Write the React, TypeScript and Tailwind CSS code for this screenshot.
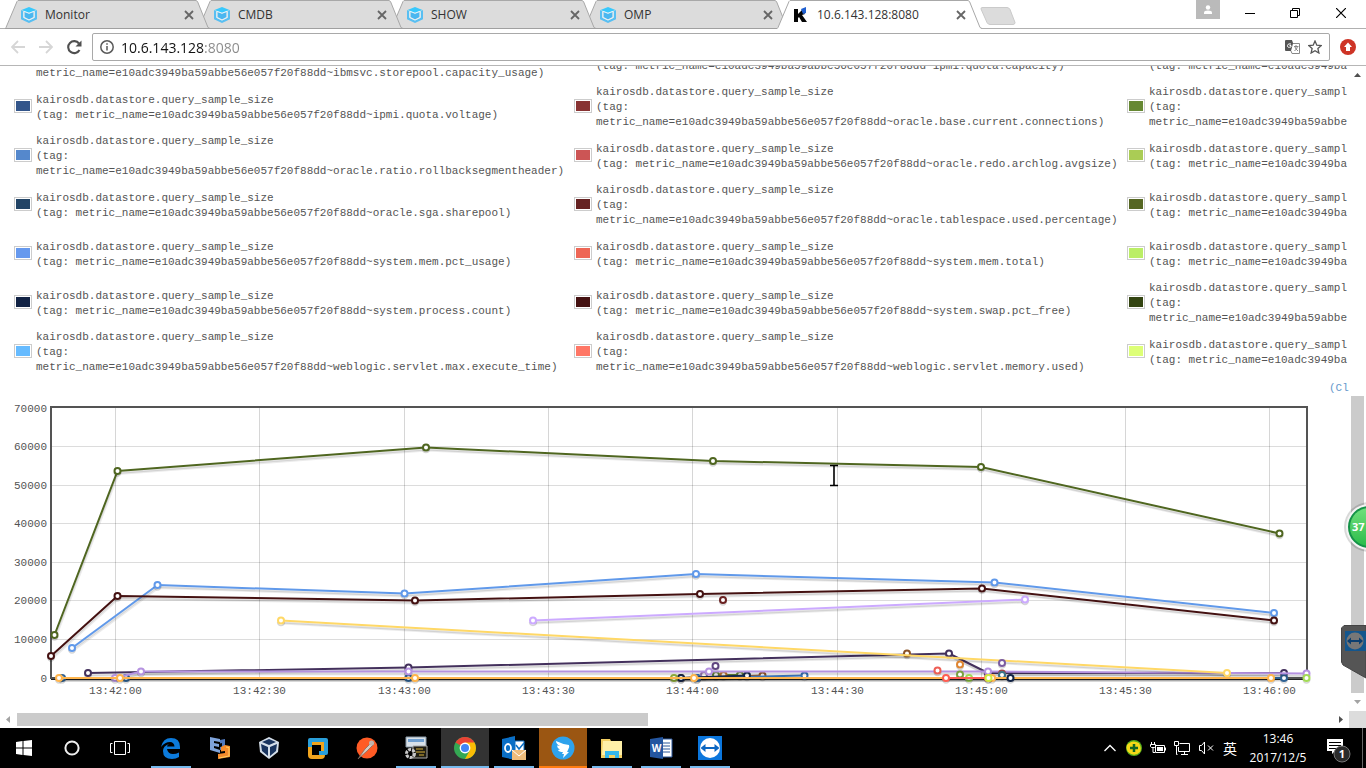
import React from "react";

const HASH = "metric_name=e10adc3949ba59abbe56e057f20f88dd~";
const NAME = "kairosdb.datastore.query_sample_size";
const CUT = "kairosdb.datastore.query_sampl";
const CUT_TAG = ["(tag: metric_name=e10adc3949ba"];
const CUT_TAG_WRAPPED = ["(tag:", "metric_name=e10adc3949ba59abbe"];
const BLANK = "\u00a0";

type Entry = { color: string; lines: string[] };

const one = (color: string, metric: string): Entry => ({ color, lines: [NAME, "(tag: " + HASH + metric + ")"] });
const wrapped = (color: string, metric: string): Entry => ({ color, lines: [NAME, "(tag:", HASH + metric + ")"] });
const cut = (color: string, tag: string[]): Entry => ({ color, lines: [CUT, ...tag] });

const LEGEND: Entry[][] = [
  [
    { color: "#4b6fa8", lines: [BLANK, BLANK, HASH + "ibmsvc.storepool.capacity_usage)"] },
    { color: "#aa4643", lines: [BLANK, "(tag: " + HASH + "ipmi.quota.capacity)"] },
    { color: "#89a54e", lines: [BLANK, ...CUT_TAG] },
  ],
  [one("#33558a", "ipmi.quota.voltage"), wrapped("#883333", "oracle.base.current.connections"), cut("#668833", CUT_TAG_WRAPPED)],
  [wrapped("#5588cc", "oracle.ratio.rollbacksegmentheader"), one("#cc5555", "oracle.redo.archlog.avgsize"), cut("#aacc55", CUT_TAG)],
  [one("#224466", "oracle.sga.sharepool"), wrapped("#662222", "oracle.tablespace.used.percentage"), cut("#556622", CUT_TAG)],
  [one("#6699ee", "system.mem.pct_usage"), one("#ee6655", "system.mem.total"), cut("#bbee66", CUT_TAG)],
  [one("#112244", "system.process.count"), one("#441111", "system.swap.pct_free"), cut("#334411", CUT_TAG_WRAPPED)],
  [wrapped("#66bbff", "weblogic.servlet.max.execute_time"), wrapped("#ff7766", "weblogic.servlet.memory.used"), cut("#ddff77", CUT_TAG)],
];

type Series = { c: string; p: number[][]; line?: boolean };

const SERIES: Series[] = [
  { c: "#4f6620", p: [[54.5, 635], [117.5, 471], [426, 447.5], [713, 461], [981, 467], [1279.5, 533.5]] },
  { c: "#6099ea", p: [[72, 648], [157.5, 585], [404.5, 593.5], [696, 574], [994.5, 582.5], [1274, 613]] },
  { c: "#441111", p: [[51, 656], [117.5, 596], [415, 600.5], [700, 594], [982, 588.5], [1274, 620.5]] },
  { c: "#6b2222", p: [[723, 600]] },
  { c: "#ccaaff", p: [[533, 620.5], [1025, 599.5]] },
  { c: "#43305c", p: [[88, 673], [408.5, 667.5], [949, 653.5], [988, 673], [1284, 673]] },
  { c: "#8a5226", p: [[907, 653.5]] },
  { c: "#2f6294", p: [[62, 678], [126, 678], [408.5, 678], [697, 678], [1284, 678]] },
  { c: "#9d7ab8", p: [[704, 675]] },
  { c: "#5f4580", p: [[715.5, 666]] },
  { c: "#668833", p: [[716, 675], [740, 675]] },
  { c: "#c4762f", p: [[723.5, 675]] },
  { c: "#9a5a2c", p: [[681, 678], [762.5, 675.5]] },
  { c: "#3a74b8", p: [[697, 678], [804.5, 675.5]] },
  { c: "#16294d", p: [[681, 678], [747, 675.5]] },
  { c: "#b592e0", p: [[115, 678], [141, 671.5], [408.5, 671.5], [709, 671.5], [988, 671.5], [1306.5, 673.5]] },
  { c: "#ffd866", p: [[281, 620.5], [1227, 673]] },
  { c: "#ee5e55", p: [[937.5, 670.5]] },
  { c: "#df8530", p: [[960, 664.5]] },
  { c: "#7ba040", p: [[960, 674.5]] },
  { c: "#7b5ca0", p: [[1002, 663]] },
  { c: "#a04444", p: [[1002, 673.5]] },
  { c: "#3a7488", p: [[1002, 675]] },
  { c: "#8aa83a", p: [[674, 678]] },
  { c: "#a3db55", p: [[969, 678], [1306.5, 678]], line: false },
  { c: "#ffb54d", p: [[59, 678], [120, 678], [415, 678], [694, 678], [992, 678], [1271, 678]] },
  { c: "#ff5d52", p: [[946, 678], [988, 678]] },
  { c: "#ccee44", p: [[988.5, 678]] },
  { c: "#112244", p: [[1010.5, 678]] },
];

const Y_TICKS = [70000, 60000, 50000, 40000, 30000, 20000, 10000, 0];
const Y_POS = [408, 446.5, 485.5, 523.5, 562.5, 600.5, 639.5, 678];
const X_TICKS: [number, string][] = [
  [115.5, "13:42:00"], [259.5, "13:42:30"], [404.5, "13:43:00"], [548.5, "13:43:30"], [692.5, "13:44:00"],
  [837.5, "13:44:30"], [981.5, "13:45:00"], [1125.5, "13:45:30"], [1269.5, "13:46:00"],
];

function Chart() {
  return (
    <svg viewBox="0 400 1351 310" className="block w-full" role="img" aria-label="Query sample size over time">
      {Y_POS.slice(1, 7).map((y) => <path key={y} d={`M51 ${y}H1307`} stroke="#dcdcdc" />)}
      {X_TICKS.map(([x]) => <path key={x} d={`M${x} 408V678`} stroke="#000" strokeOpacity=".16" />)}
      <rect x="51" y="407" width="1256" height="271" fill="none" stroke="#545454" strokeWidth="2" />
      <path d="M51 679.500H1308" stroke="#222" />
      {SERIES.map((s, i) => {
        const pts = s.p.map((q) => q.join(",")).join(" ");
        return (
          <g key={i} fill="none">
            {s.line !== false && s.p.length > 1 && (
              <>
                <polyline points={pts} stroke="#000" strokeOpacity=".08" strokeWidth="2" transform="translate(1 3)" />
                <polyline points={pts} stroke="#000" strokeOpacity=".11" strokeWidth="2" transform="translate(0 2)" />
                <polyline points={pts} stroke={s.c} strokeWidth="2" strokeLinejoin="round" />
              </>
            )}
            {s.p.map(([x, y], j) => (
              <g key={j}>
                <path d={`M${x - 3.4} ${y + 1.5}a3.4 3.4 0 0 0 6.8 0`} stroke="#000" strokeOpacity=".16" strokeWidth="1.5" />
                <circle cx={x} cy={y} r="3" fill="#fff" stroke={s.c} strokeWidth="2" />
              </g>
            ))}
          </g>
        );
      })}
      <g fill="#545454" fontFamily="'Liberation Mono', monospace" fontSize="11">
        {Y_TICKS.map((t, i) => <text key={t} x="47" y={Math.floor(Y_POS[i]) + 4} textAnchor="end">{t}</text>)}
        {X_TICKS.map(([x, t]) => <text key={t} x={x} y="694" textAnchor="middle">{t}</text>)}
      </g>
      <path d="M830 465.500h3.500l.5 1 .5-1h3.500M830 485.500h3.500l.5-1 .5 1h3.500M834 466v19" stroke="#000" strokeWidth="1.600" fill="none" />
    </svg>
  );
}

function HexLogo() {
  return (
    <svg width="16" height="16" viewBox="0 0 16 16" className="shrink-0" aria-hidden="true">
      <path d="M8 0l7.500 3L8 6 .5 3z" fill="#38c8fc" />
      <path d="M0 3l2.300 1.200v6.600L8 13.600l5.700-2.800V4.200L16 3v9.300L8 16l-8-3.700z" fill="#58bff2" />
      <path d="M3.500 5L8 6.800 12.500 5v5L8 12.400 3.500 10z" fill="#4ab7f0" />
      <path d="M2.800 4.200L8 6.200l5.200-2M2.800 4.500v6L8 13l5.200-2.500v-6" stroke="#e8f6fd" strokeWidth=".9" fill="none" />
    </svg>
  );
}

function KLogo() {
  return (
    <svg width="16" height="16" viewBox="0 0 16 16" className="shrink-0" aria-hidden="true">
      <path d="M1 2h4v5l4-4 3 4-3 1 5 7H9L6 10l-1 1v4H1z" fill="#050505" />
      <path d="M8 2l5-2v6l-3 1z" fill="#1f5fd0" />
    </svg>
  );
}

function Tab({ title, active = false, z }: { title: string; active?: boolean; z: string }) {
  return (
    <div className={`relative -ml-3 h-[29px] w-[205px] shrink first:ml-0 ${z}`}>
      <svg className="absolute inset-0 h-full w-full" viewBox="0 0 205 29" preserveAspectRatio="none" aria-hidden="true">
        <path d="M0 29L1 27.500 12 1.500 13 .5H191L192.500 1.500 203 27.500 205 29z" fill={active ? "#fff" : "#dcdcdc"} />
        <path d="M0 28.500L1 27.500 12 1.500 13 .5H191L192.500 1.500 203 27.500 205 28.500" fill="none" stroke="#a8a8a8" />
        {!active && <path d="M0 28.500H205" stroke="#a0a0a0" />}
      </svg>
      <div className="relative flex h-full items-center gap-2 pl-4 pr-4">
        {active ? <KLogo /> : <HexLogo />}
        <span className="min-w-0 flex-1 whitespace-nowrap text-xs text-[#333]">{title}</span>
        <button aria-label={`Close ${title}`} className="text-[#666]">
          <svg width="10" height="10" viewBox="0 0 10 10"><path d="M1 1l8 8M9 1L1 9" stroke="currentColor" strokeWidth="1.800" /></svg>
        </button>
      </div>
    </div>
  );
}

function Browser() {
  return (
    <header className="shrink-0 bg-white">
      <div className="relative flex h-[29px]">
        <div className="absolute inset-x-0 bottom-0 h-px bg-[#b0b0b0]" />
        <nav className="flex min-w-0 pl-[5px]" aria-label="Tabs">
          <Tab title="Monitor" z="z-[4]" />
          <Tab title="CMDB" z="z-[3]" />
          <Tab title="SHOW" z="z-[2]" />
          <Tab title="OMP" z="z-[1]" />
          <Tab title="10.6.143.128:8080" z="z-[5]" active />
          <button aria-label="New tab" className="relative -ml-0.5 h-7 w-9">
            <svg width="36" height="28" viewBox="0 0 36 28"><path d="M2 7.500H27q2 0 3 2l5 13q0 2-2 2H10q-2 0-3-2L1 9q0-1.500 1-1.500z" fill="#dcdcdc" stroke="#cacaca" /></svg>
          </button>
        </nav>
        <div className="ml-auto flex">
          <button aria-label="Profile" className="mr-4 flex h-[19px] w-6 items-center justify-center bg-[#bababa]">
            <svg width="10" height="10" viewBox="0 0 10 10" fill="#fff"><circle cx="5" cy="2.500" r="2.200" /><path d="M1 9V7.500Q1 5.500 5 5.500T9 7.500V9z" /></svg>
          </button>
          <button aria-label="Minimize" className="flex h-[26px] w-[28px] items-center justify-center">
            <svg width="10" height="10" viewBox="0 0 10 10"><path d="M0 5.500h10" stroke="#000" /></svg>
          </button>
          <button aria-label="Restore" className="ml-[17px] flex h-[26px] w-[28px] items-center justify-center">
            <svg width="10" height="10" viewBox="0 0 10 10" fill="none" stroke="#000"><path d="M.5 2.500h7v7h-7zM2.500 2.500v-2h7v7h-2" /></svg>
          </button>
          <button aria-label="Close window" className="ml-[17px] mr-2.5 flex h-[26px] w-[30px] items-center justify-center">
            <svg width="10" height="10" viewBox="0 0 10 10"><path d="M0 0l10 10M10 0L0 10" stroke="#000" strokeWidth="1.200" /></svg>
          </button>
        </div>
      </div>
      <div className="flex h-[37px] items-center border-b border-[#b6b6b6] pl-[11px] pr-2.5">
        <button aria-label="Back" className="w-7">
          <svg width="14" height="14" viewBox="0 0 14 14" fill="none" stroke="#d6d6d6" strokeWidth="1.800"><path d="M14 7H1M7 1L1 7l6 6" /></svg>
        </button>
        <button aria-label="Forward" className="w-7">
          <svg width="14" height="14" viewBox="0 0 14 14" fill="none" stroke="#d6d6d6" strokeWidth="1.800"><path d="M0 7h13M7 1l6 6-6 6" /></svg>
        </button>
        <button aria-label="Reload" className="w-[25px]">
          <svg width="15" height="15" viewBox="0 0 15 15"><path d="M12.500 10A6 6 0 1 1 12 3.500" fill="none" stroke="#505050" strokeWidth="2.100" /><path d="M14.500 .5V6.500H8.500z" fill="#505050" /></svg>
        </button>
        <div className="flex h-7 min-w-0 flex-1 items-center rounded-[2px] border border-[#a9a9a9] pl-[7px] pr-[7px]">
          <svg width="14" height="14" viewBox="0 0 14 14" className="shrink-0" fill="none" stroke="#5a5a5a" strokeWidth="1.500" aria-hidden="true"><circle cx="7" cy="7" r="6.200" /><path d="M7 6v4.500M7 3.200v1.600" /></svg>
          <input
            aria-label="Address"
            defaultValue="10.6.143.128:8080"
            className="ml-[7px] h-6 min-w-0 flex-1 bg-[linear-gradient(90deg,#111_83px,#8a8a8a_83px)] bg-clip-text text-sm text-transparent outline-none"
          />
          <button aria-label="Translate" className="mr-2">
            <svg width="15" height="15" viewBox="0 0 15 15"><path d="M1 0h6l1 3v8H1q-1 0-1-1V1q0-1 1-1z" fill="#555" /><path d="M8 3.500h6.500v10H7L6 11" fill="#fff" stroke="#888" /><path d="M6 4Q3 3 2.500 5.500T6 7V5.500H4.500" stroke="#fff" fill="none" /><path d="M9 6.500h4.500M11 5v1.500M12.500 6.500Q12 9 9.500 11M10 7q.5 2 3 4" stroke="#888" fill="none" /></svg>
          </button>
          <button aria-label="Bookmark">
            <svg width="14" height="14" viewBox="0 0 14 14"><path d="M7 1l1.800 4.200 4.500.4-3.400 3 1 4.400L7 10.700 3.100 13l1-4.400-3.400-3 4.500-.4z" fill="none" stroke="#555" strokeWidth="1.300" /></svg>
          </button>
        </div>
        <button aria-label="Update available" className="ml-2.5">
          <svg width="16" height="16" viewBox="0 0 16 16"><circle cx="8" cy="8" r="8" fill="#ce3426" /><path d="M8 3.500l4 4.500h-2v4H6V8H4z" fill="#fff" /></svg>
        </button>
      </div>
    </header>
  );
}

function Legend() {
  return (
    <table className="-mt-[33px] ml-[14px] table-fixed border-collapse text-[11px] leading-[15px] text-[#545454]">
      <tbody>
        {LEGEND.map((row, i) => (
          <tr key={i} className="h-[49px]">
            {row.map((e, j) => (
              <React.Fragment key={j}>
                <td className="p-0 pb-0.5 align-middle">
                  <div className="mr-1 h-[14px] w-[18px] border border-[#ccc] p-px"><div className="h-full w-full" style={{ background: e.color }} /></div>
                </td>
                <td className="p-0 pt-0.5 align-middle font-[Liberation_Mono,monospace] whitespace-pre">
                  <div className={j === 0 ? "w-[538px]" : j === 1 ? "w-[531px]" : "w-[200px]"}>
                    {e.lines.map((l, k) => <div key={k}>{l}</div>)}
                  </div>
                </td>
              </React.Fragment>
            ))}
          </tr>
        ))}
      </tbody>
    </table>
  );
}

const APPS: { name: string; state: string; icon: React.ReactNode }[] = [
  { name: "Edge", state: "run", icon: <path d="M2 11Q4 2 12 2q9 0 9 9v2H8q1 5 6 5 3 0 6-1.500V21q-3 2-7 2-9 0-9-8 0-5 6-7Q8 9 8 10.500h7.500Q15 6 11 6 6 6 2 11z" fill="#0c7bdc" /> },
  { name: "Editor", state: "", icon: <><path d="M2 1l10 2v3L6 5v2l5 1v3L6 10v2l6 2v3L2 14z" fill="#7fa4dc" /><path d="M12 4l5-1v10l-5 1v-3l2-.5V7l-2 .5z" fill="#4f78be" /><path d="M17 9l5 1v11l-12 2v-5l7-1v-2l-4 .5V11z" fill="#f58b2c" /><path d="M18 11l3 .5v8.500l-10 2" stroke="#ffd060" fill="none" /></> },
  { name: "VirtualBox", state: "", icon: <><path d="M12 1l10 5-1 10-9 7-9-7L2 6z" fill="#d5dfe9" /><path d="M12 3l7 3-7 3-7-3zM4 8l7 3v9l-6-5zM20 8l-7 3v9l6-5z" fill="#19345e" /></> },
  { name: "VMware", state: "", icon: <><rect x="4" y="7" width="13" height="14" rx="2" fill="none" stroke="#f2a51e" strokeWidth="4" /><path d="M4 11V4h16v13h-7" fill="none" stroke="#2a9fda" strokeWidth="4" strokeLinejoin="round" /></> },
  { name: "Postman", state: "", icon: <><circle cx="12" cy="12" r="10.500" fill="#ff5b25" /><path d="M18 5l-8 8-7 10 9-8 7-7z" fill="#d9cbc2" stroke="#76675f" strokeWidth=".7" /><circle cx="16.500" cy="7" r="2.500" fill="#c3b5ac" /></> },
  { name: "Script tool", state: "run", icon: <><path d="M2 1h20v10H2z" fill="#d9e1e8" stroke="#8a9aa8" /><path d="M4 3h16v3H4z" fill="#6f9fd0" /><path d="M9 10h14v12H9z" fill="#1f1d12" stroke="#aaa" /><path d="M12 13h7M12 16h9M15 19h5" stroke="#d8b23a" /><circle cx="6.500" cy="17.500" r="4" fill="none" stroke="#c9c9c9" strokeWidth="3" strokeDasharray="3 1" /></> },
  { name: "Chrome", state: "active", icon: <><circle cx="12" cy="12" r="11" fill="#34a853" /><path d="M12 12L2.500 6.500A11 11 0 0 1 21.500 6.500z" fill="#ea4335" /><path d="M12 6.500h9.500A11 11 0 0 1 12 23l5-9z" fill="#fbbc05" /><circle cx="12" cy="12" r="5.400" fill="#fff" /><circle cx="12" cy="12" r="4" fill="#4285f4" /></> },
  { name: "Outlook", state: "run", icon: <><path d="M0 3l13-3v24L0 21z" fill="#0a6fc6" /><ellipse cx="6" cy="12" rx="3" ry="4" fill="none" stroke="#fff" strokeWidth="1.800" /><path d="M13 5h9v12h-9z" fill="#fff" stroke="#0a6fc6" /><path d="M14 9l3 4 5-6" stroke="#0a6fc6" strokeWidth="1.500" fill="none" /><path d="M10 14h14v10H10z" fill="#efbd7b" /><path d="M10 14l7 6 7-6" stroke="#fff" fill="none" /></> },
  { name: "DingTalk", state: "alert", icon: <><circle cx="12" cy="12" r="11.500" fill="#2ea2ec" /><path d="M5 5q6 3 13 4 1 2-1 5l-1 2h2l-6 6 1-4h-2l1-2q-4 0-5-2l2-.5Q6 12 6 9.500l3 .5Q5 8 5 5z" fill="#fff" /></> },
  { name: "File Explorer", state: "run", icon: <><path d="M1 3h9l1 2h11v17H1z" fill="#f3cf63" /><path d="M3 5h19v14H2z" fill="#fff0a8" /><path d="M5 22v-7h14v7h-4v-3H9v3z" fill="#35b8ed" /></> },
  { name: "Word", state: "run", icon: <><path d="M12 3h11v18H12z" fill="#fff" stroke="#2b579a" /><path d="M14 7h7M14 10h7M14 13h7M14 16h7" stroke="#2b579a" /><path d="M1 3l13-2v22L1 21z" fill="#2456a0" /><text x="7.500" y="16" textAnchor="middle" fill="#fff" fontSize="10" fontWeight="700">W</text></> },
  { name: "TeamViewer", state: "run", icon: <><path d="M0 0h24v24H0z" fill="#0b76dc" /><circle cx="12" cy="12" r="10" fill="#fff" /><path d="M2.500 12l5-4v3h9V8l5 4-5 4v-3h-9v3z" fill="#0b66c2" /></> },
];

function Taskbar() {
  return (
    <footer className="flex h-10 shrink-0 bg-black text-white">
      <button aria-label="Start" className="flex w-12 items-center justify-center">
        <svg width="16" height="16" viewBox="0 0 16 16" fill="#fff"><path d="M0 2l6.500-1v6.500H0zM7.500 1L16 0v7.500H7.500zM0 8.500h6.500V15L0 14zM7.500 8.500H16V16l-8.500-1z" /></svg>
      </button>
      <button aria-label="Cortana" className="flex w-12 items-center justify-center">
        <svg width="16" height="16" viewBox="0 0 16 16"><circle cx="8" cy="8" r="6.600" fill="none" stroke="#eee" strokeWidth="2" /></svg>
      </button>
      <button aria-label="Task view" className="mr-[3px] flex w-12 items-center justify-center">
        <svg width="20" height="14" viewBox="0 0 20 14" fill="none" stroke="#fff"><path d="M4.500.5h11v13h-11zM2.500 2.500h-2v9h2M17.500 2.500h2v9h-2" /></svg>
      </button>
      <div className="flex gap-px">
        {APPS.map((a) => (
          <button
            key={a.name}
            aria-label={a.name}
            className={`flex w-12 flex-col items-center justify-end ${a.state === "active" ? "bg-[#333]" : a.state === "alert" ? "bg-[#9b5612]" : ""}`}
          >
            <svg width="24" height="24" viewBox="0 0 24 24" className="mb-1.5">{a.icon}</svg>
            <span className={`h-0.5 ${a.state === "active" ? "w-12 bg-[#76b9ed]" : a.state === "alert" ? "w-12 bg-[#ff7c10]" : a.state === "run" ? "w-10 bg-[#76b9ed]" : "w-10"}`} />
          </button>
        ))}
      </div>
      <div className="ml-auto flex items-center">
        <button aria-label="Show hidden icons" className="flex w-6 justify-center"><svg width="12" height="8" viewBox="0 0 12 8"><path d="M.5 7L6 1.500 11.500 7" fill="none" stroke="#fff" strokeWidth="1.300" /></svg></button>
        <button aria-label="Security" className="flex w-6 justify-center"><svg width="16" height="16" viewBox="0 0 16 16"><circle cx="8" cy="8" r="8" fill="#54ad1d" /><path d="M1 5Q6-1 13 3q3 5 1 9-4 4-9 2Q-1 11 1 5z" fill="#f4d817" /><path d="M8 4v8M4 8h8" stroke="#126622" strokeWidth="2.500" /></svg></button>
        <button aria-label="Power" className="flex w-6 justify-center"><svg width="16" height="13" viewBox="0 0 16 13" fill="none" stroke="#fff"><path d="M5.500 3.500h9v7h-9zM15.500 5.500v3M1.500 0v2.500M4.500 0v2.500M.5 2.500h5v2l-1 1h-3l-1-1zM3 6v4.500h2" /><path d="M7 5h6v4H7z" fill="#fff" stroke="none" /></svg></button>
        <button aria-label="Network" className="flex w-6 justify-center"><svg width="16" height="14" viewBox="0 0 16 14" fill="none" stroke="#fff"><path d="M5.500 2.500h10v8h-11V6M.5.5h4v4h-4zM2.500 5v8.500h1M7 13.500h7M10.500 11v2.500" /></svg></button>
        <button aria-label="Volume muted" className="flex w-6 justify-center"><svg width="15" height="14" viewBox="0 0 15 14" fill="none" stroke="#fff"><path d="M.5 4.500h2l3-3.500v12l-3-3.500h-2zM9 4.500l5 5M14 4.500l-5 5" /></svg></button>
        <button aria-label="Input language" className="w-6 font-[Noto_Sans_CJK_SC,sans-serif] text-sm leading-5">英</button>
        <div className="flex w-[72px] flex-col items-center text-xs leading-[19px]"><span>13:46</span><span>2017/12/5</span></div>
        <button aria-label="Notifications" className="ml-2 flex w-8 justify-center pt-1">
          <svg width="25" height="25" viewBox="0 0 25 25"><path d="M1 1h16v12H9l-3 3v-3H1z" fill="#fff" /><path d="M3 4.500h12M3 7.500h12M3 10.500h8" stroke="#000" /><circle cx="16" cy="16" r="8" fill="#2b2b2b" stroke="#777" /><text x="16" y="20" textAnchor="middle" fill="#fff" fontSize="11" fontWeight="700">1</text></svg>
        </button>
        <div className="ml-2 mr-[3px] h-10 w-px bg-[#666]" />
      </div>
    </footer>
  );
}

export default function App() {
  return (
    <div className="flex h-screen flex-col overflow-hidden bg-white font-[Open_Sans,sans-serif]">
      <Browser />
      <main className="relative flex min-h-0 flex-1">
        <div className="min-w-0 flex-1 overflow-hidden">
          <Legend />
          <div className="mr-px flex h-[24px] justify-end pt-[5px]">
            <a href="#zoom" className="w-[21px] overflow-hidden font-[Liberation_Mono,monospace] text-[11px] leading-[15px] whitespace-pre text-[#6699cc]">(Cl:</a>
          </div>
          <Chart />
        </div>
        <div className="flex w-[15px] shrink-0 flex-col bg-white" aria-hidden="true">
          <svg width="13" height="17" viewBox="0 0 13 17"><path d="M3 11l3.500-4 3.500 4z" fill="#505050" /></svg>
          <div className="mt-[313px] w-[13px] flex-1 bg-[#cbcbcb]" />
          <svg width="13" height="18" viewBox="0 0 13 18"><path d="M3 7h7l-3.500 4z" fill="#a3a3a3" /></svg>
        </div>
        <div className="absolute -right-7 top-[436px] flex h-[50px] w-[50px] items-center rounded-full bg-black/15">
          <div className="ml-0.5 flex h-[46px] w-[46px] items-center rounded-full border-2 border-[#f4f4f4] bg-[#159348] p-0.5">
            <div className="flex h-full w-full items-center rounded-full bg-linear-to-b from-[#6ee07c] to-[#27bc4a] pl-0.5 text-[11px] font-bold text-white">37</div>
          </div>
        </div>
        <svg className="absolute right-0 top-[559px]" width="25" height="54" viewBox="0 0 25 54" aria-hidden="true">
          <path d="M3 .5H25V53L2 40 .5 37V3z" fill="#555" stroke="#444" />
          <path d="M4 6h21v20H4z" fill="#14568d" /><circle cx="14" cy="16" r="8.500" fill="#777" /><path d="M6 16l4-3.500v2.500h8v-2.500l4 3.500-4 3.500V17h-8v2.500z" fill="#0c3f70" />
        </svg>
      </main>
      <div className="flex h-[17px] shrink-0 items-center" aria-hidden="true">
        <svg width="17" height="17" viewBox="0 0 17 17"><path d="M10 5v7L6 8.500z" fill="#a3a3a3" /></svg>
        <div className="flex-1"><div className="h-[13px] w-[48%] bg-[#cbcbcb]" /></div>
        <svg width="17" height="17" viewBox="0 0 17 17"><path d="M7 5v7l4-3.500z" fill="#505050" /></svg>
        <div className="h-[17px] w-[17px] bg-[#dcdcdc]" />
      </div>
      <Taskbar />
    </div>
  );
}
